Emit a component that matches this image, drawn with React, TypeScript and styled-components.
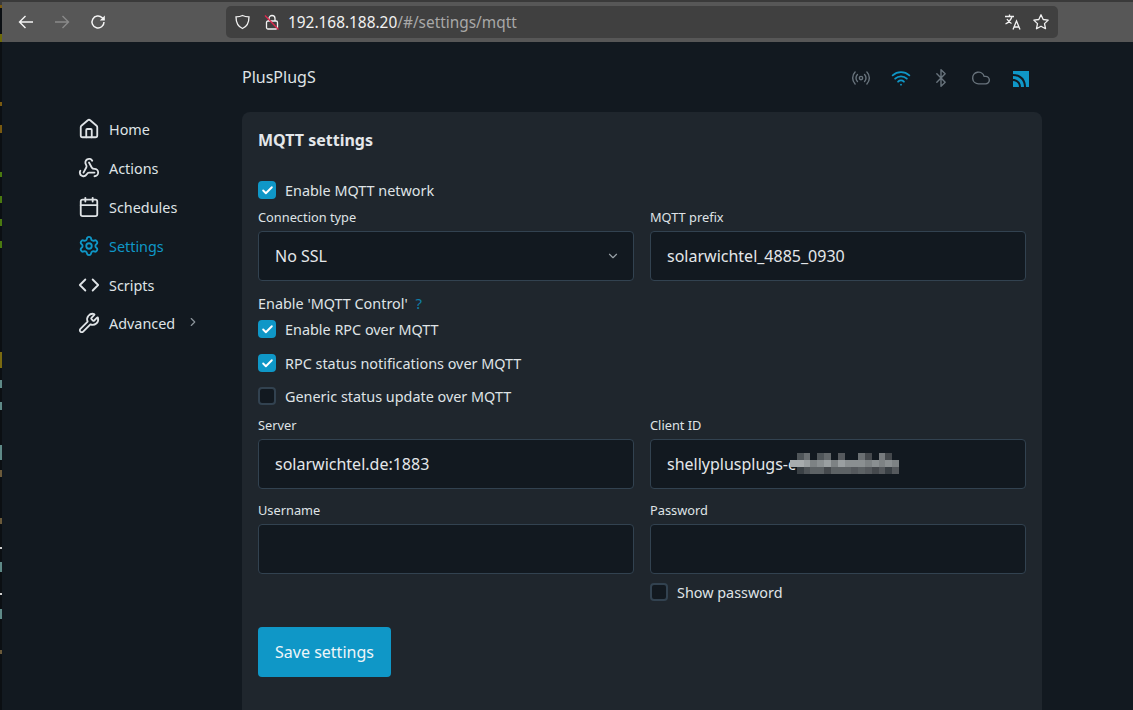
import { Check, ChevronDown, ChevronRight, Bluetooth, Calendar, Cloud, Code, House, Radio, Settings, Webhook, Wifi, Wrench } from "lucide-react";
import styled, { createGlobalStyle } from "styled-components";

const GlobalStyle = createGlobalStyle`
    html, body {
        margin: 0;
        padding: 0;
        height: 100%;
        background: #121920;
        font-family: "Noto Sans", sans-serif;
        overflow: hidden;
    }
`;

const navItems = [
    { label: "Home", Icon: House },
    { label: "Actions", Icon: Webhook },
    { label: "Schedules", Icon: Calendar },
    { label: "Settings", Icon: Settings, active: true },
    { label: "Scripts", Icon: Code },
    { label: "Advanced", Icon: Wrench, more: true },
];

// blurred part of the client id, one row per 7px band
const mosaicRows = [
    ["", "#4f5559", "#6a6f72", "", "#4f5559", "#63686b", "", "#55595d", "", "", "#6a6f72", "#45494d", "", "#777b7e", "#44484c", ""],
    ["#a8acae", "#a8acae", "#9a9fa1", "#7d8284", "#8a8f91", "#9a9fa1", "#7d8284", "#9a9fa1", "#8a8f91", "#8a8f91", "#8a8f91", "#7d8284", "#8a8f91", "#7d8284", "#8a8f91", "#7d8284"],
    ["", "#3a4045", "#4f5458", "#5d6265", "#5d6265", "#45494d", "#5d6265", "#5d6265", "#5d6265", "#55595d", "#5d6265", "#55595d", "#45494d", "#55595d", "#3a4045", "#55595d"],
];

function App() {
    return (
        <Window>
            <GlobalStyle />
            <EdgeStrip />
            <Frame>
                <BrowserBar>
                    <BarButton>
                        <svg width="18" height="18" viewBox="0 0 18 18" fill="none" stroke="currentColor" strokeWidth="1.4">
                            <path d="M16 9H3M8.500 3 2.500 9l6 6" />
                        </svg>
                    </BarButton>
                    <BarButton $off>
                        <svg width="18" height="18" viewBox="0 0 18 18" fill="none" stroke="currentColor" strokeWidth="1.4">
                            <path d="M2 9h13M9.500 3l6 6-6 6" />
                        </svg>
                    </BarButton>
                    <BarButton>
                        <svg width="18" height="18" viewBox="0 0 18 18" fill="none" stroke="currentColor" strokeWidth="1.5">
                            <path d="M15 9a6 6 0 1 1-1.800-4.300L15 6.500" />
                            <path d="M15.800 2.500v5h-5" fill="currentColor" stroke="none" />
                        </svg>
                    </BarButton>
                    <UrlBox>
                        <UrlLeft>
                            <svg width="22" height="16" viewBox="0 0 22 16" fill="none" stroke="#f2f2f2" strokeWidth="1.3">
                                <path d="M8.500 1.500c2 1 4.500 1.300 6.500 1.300 0 6-1.500 9.700-6.500 11.700C3.500 12.500 2 8.800 2 2.800c2 0 4.500-.3 6.500-1.300z" />
                            </svg>
                            <svg width="16" height="18" viewBox="0 0 16 18">
                                <path d="M5 8V5.500a3 3 0 0 1 6 0V8" fill="none" stroke="#f2f2f2" strokeWidth="1.3" />
                                <rect x="2.500" y="8" width="11" height="8" rx="1.500" fill="none" stroke="#f2f2f2" strokeWidth="1.300" />
                                <path d="M1 2.500 14.500 16.500" stroke="#e0294f" strokeWidth="1.400" />
                            </svg>
                            <UrlText>
                                192.168.188.20<UrlPath>/#/settings/mqtt</UrlPath>
                            </UrlText>
                        </UrlLeft>
                        <UrlRight>
                            <svg width="18" height="18" viewBox="0 0 18 18" fill="none" stroke="#f2f2f2" strokeWidth="1.300">
                                <path d="M1 3.500h9M5.500 1.500v2M8 3.500C7 7 4.500 9.500 1.500 11M3 6c1 2 2.700 3.500 4.500 4.500" />
                                <path d="M9 16.500 12.500 8l3.500 8.500M10.200 14h4.600" />
                            </svg>
                            <svg width="18" height="18" viewBox="0 0 18 18" fill="none" stroke="#f2f2f2" strokeWidth="1.300">
                                <path d="M9 1.800l2.200 4.700 5 .6-3.700 3.500 1 5.100L9 13.200l-4.500 2.500 1-5.100L1.800 7.100l5-.6z" strokeLinejoin="round" />
                            </svg>
                        </UrlRight>
                    </UrlBox>
                </BrowserBar>
                <Page>
                    <Sidebar>
                        {navItems.map(({ label, Icon, active, more }) => (
                            <NavItem key={label} $active={active}>
                                <Icon size={22} strokeWidth={2} />
                                <span>{label}</span>
                                {more && <NavChevron><ChevronRight size={14} /></NavChevron>}
                            </NavItem>
                        ))}
                    </Sidebar>
                    <Content>
                        <Header>
                            <DeviceName>PlusPlugS</DeviceName>
                            <StatusIcons>
                                <StatusIcon><Radio size={20} strokeWidth={1.700} /></StatusIcon>
                                <StatusIcon $on><Wifi size={20} strokeWidth={2.200} /></StatusIcon>
                                <StatusIcon><Bluetooth size={20} strokeWidth={1.700} /></StatusIcon>
                                <StatusIcon><Cloud size={20} strokeWidth={1.700} /></StatusIcon>
                                <StatusIcon $on>
                                    <svg width="20" height="20" viewBox="0 -1 20 20" fill="#0f97c7">
                                        <path d="M2 2h16v16h-3C15 9.800 9.800 5 2 5zM2 7c6.500 0 11 4.500 11 11h-3c0-4.600-3.500-8-8-8zM2 12c3.500 0 6 2.500 6 6H2z" />
                                    </svg>
                                </StatusIcon>
                            </StatusIcons>
                        </Header>
                        <Card>
                            <Title>MQTT settings</Title>
                            <CheckRow $mt={29}>
                                <CheckBox $checked><Check size={13} strokeWidth={3.500} /></CheckBox>
                                Enable MQTT network
                            </CheckRow>
                            <FieldGrid $mt={9}>
                                <Field>
                                    <FieldLabel>Connection type</FieldLabel>
                                    <InputBox>
                                        No SSL
                                        <SelectArrow><ChevronDown size={14} /></SelectArrow>
                                    </InputBox>
                                </Field>
                                <Field>
                                    <FieldLabel>MQTT prefix</FieldLabel>
                                    <InputBox>solarwichtel_4885_0930</InputBox>
                                </Field>
                            </FieldGrid>
                            <GroupLabel>
                                Enable 'MQTT Control' <Help>?</Help>
                            </GroupLabel>
                            <CheckRow $mt={7}>
                                <CheckBox $checked><Check size={13} strokeWidth={3.500} /></CheckBox>
                                Enable RPC over MQTT
                            </CheckRow>
                            <CheckRow $mt={16}>
                                <CheckBox $checked><Check size={13} strokeWidth={3.500} /></CheckBox>
                                RPC status notifications over MQTT
                            </CheckRow>
                            <CheckRow $mt={15}>
                                <CheckBox />
                                Generic status update over MQTT
                            </CheckRow>
                            <FieldGrid $mt={11}>
                                <Field>
                                    <FieldLabel>Server</FieldLabel>
                                    <InputBox>solarwichtel.de:1883</InputBox>
                                </Field>
                                <Field>
                                    <FieldLabel>Client ID</FieldLabel>
                                    <InputBox>
                                        shellyplusplugs-c
                                        <Mosaic width="109" height="21" viewBox="0 0 16 3" preserveAspectRatio="none" shapeRendering="crispEdges">
                                            {mosaicRows.map((row, y) =>
                                                row.map((fill, x) => fill && <rect key={`${x}-${y}`} x={x} y={y} width="1" height="1" fill={fill} />)
                                            )}
                                        </Mosaic>
                                    </InputBox>
                                </Field>
                            </FieldGrid>
                            <FieldGrid $mt={12}>
                                <Field>
                                    <FieldLabel>Username</FieldLabel>
                                    <InputBox />
                                </Field>
                                <Field>
                                    <FieldLabel>Password</FieldLabel>
                                    <InputBox />
                                    <CheckRow $mt={9}>
                                        <CheckBox />
                                        Show password
                                    </CheckRow>
                                </Field>
                            </FieldGrid>
                            <SaveButton>Save settings</SaveButton>
                        </Card>
                    </Content>
                </Page>
            </Frame>
        </Window>
    );
}

const Window = styled.div`
    display: flex;
    width: 1133px;
    height: 710px;
    overflow: hidden;
    background: #121920;
`;

const EdgeStrip = styled.div`
    flex: none;
    width: 2px;
    background: linear-gradient(
        to bottom,
        #3a3a3a 0 5px,
        #7a5a10 5px 8px,
        #0b0f13 8px 34px,
        #6e6a08 34px 42px,
        #0b0f13 42px 102px,
        #7a5a10 102px 106px,
        #0b0f13 106px 125px,
        #7a5a10 125px 133px,
        #0b0f13 133px 172px,
        #4a7a10 172px 177px,
        #0b0f13 177px 196px,
        #4a7a10 196px 203px,
        #0b0f13 203px 219px,
        #4a7a10 219px 226px,
        #0b0f13 226px 241px,
        #4a7a10 241px 248px,
        #0b0f13 248px 352px,
        #7a6a10 352px 368px,
        #0b0f13 368px 380px,
        #5f8a88 380px 388px,
        #0b0f13 388px 402px,
        #5f8a88 402px 410px,
        #0b0f13 410px 445px,
        #5f8a88 445px 460px,
        #0b0f13 460px 470px,
        #6b5a3a 470px 477px,
        #0b0f13 477px 518px,
        #6b5a3a 518px 524px,
        #0b0f13 524px 547px,
        #cfcfcf 547px 549px,
        #0b0f13 549px 562px,
        #5f8a88 562px 572px,
        #0b0f13 572px 593px,
        #cfcfcf 593px 595px,
        #0b0f13 595px 609px,
        #5f8a88 609px 619px,
        #0b0f13 619px 650px,
        #6b5a3a 650px 654px,
        #0b0f13 654px
    );
`;

const Frame = styled.div`
    flex: 1;
    display: flex;
    flex-direction: column;
    min-width: 0;
`;

const BrowserBar = styled.div`
    flex: none;
    height: 42px;
    box-sizing: border-box;
    display: flex;
    align-items: center;
    padding: 0 75px 0 15px;
    gap: 18px;
    background: #575757;
    border-top: 2px solid #3a3a3a;
`;

const BarButton = styled.div<{ $off?: boolean }>`
    display: flex;
    color: ${(p) => (p.$off ? "#8a8a8a" : "#f5f5f5")};
`;

const UrlBox = styled.div`
    flex: 1;
    height: 32px;
    margin-left: 101px;
    display: flex;
    align-items: center;
    justify-content: space-between;
    padding: 0 8px;
    background: #404040;
    border-radius: 5px;
`;

const UrlLeft = styled.div`
    display: flex;
    align-items: center;
    gap: 8px;
`;

const UrlRight = styled.div`
    display: flex;
    align-items: center;
    gap: 10px;
`;

const UrlText = styled.span`
    padding-top: 1px;
    font-size: 15.4px;
    color: #f2f2f2;
`;

const UrlPath = styled.span`
    color: #a8a8a8;
`;

const Page = styled.div`
    flex: 1;
    display: flex;
    min-height: 0;
    padding-left: 76px;
`;

const Sidebar = styled.nav`
    flex: none;
    width: 164px;
    padding-top: 74px;
    display: flex;
    flex-direction: column;
    gap: 13px;
`;

const NavItem = styled.div<{ $active?: boolean }>`
    display: flex;
    align-items: center;
    gap: 9px;
    height: 26px;
    font-size: 14.4px;
    color: ${(p) => (p.$active ? "#0f97c7" : "#dfe3e6")};

    &:last-child {
        margin-top: -1px;
    }
`;

const NavChevron = styled.span`
    display: flex;
    margin-left: 2px;
    margin-top: -3px;
    color: #8b939a;
`;

const Content = styled.main`
    flex: none;
    width: 800px;
    display: flex;
    flex-direction: column;
`;

const Header = styled.header`
    flex: none;
    height: 70px;
    display: flex;
    align-items: center;
    justify-content: space-between;
    padding-right: 11px;
`;

const DeviceName = styled.div`
    font-size: 16px;
    color: #dfe3e6;
`;

const StatusIcons = styled.div`
    display: flex;
    align-items: center;
    gap: 20px;
    padding-top: 2px;
`;

const StatusIcon = styled.span<{ $on?: boolean }>`
    display: flex;
    color: ${(p) => (p.$on ? "#0f97c7" : "#68737c")};
`;

const Card = styled.section`
    flex: 1;
    padding: 16px;
    background: #1f262d;
    border-radius: 8px 8px 0 0;
`;

const Title = styled.h2`
    margin: 0;
    font-size: 16px;
    line-height: 24px;
    font-weight: 700;
    color: #e4e7ea;
`;

const CheckRow = styled.label<{ $mt: number }>`
    display: flex;
    align-items: center;
    gap: 9px;
    height: 18px;
    margin-top: ${(p) => p.$mt}px;
    font-size: 14.4px;
    color: #dfe3e6;
`;

const CheckBox = styled.span<{ $checked?: boolean }>`
    flex: none;
    box-sizing: border-box;
    width: 18px;
    height: 18px;
    display: flex;
    align-items: center;
    justify-content: center;
    border-radius: 4px;
    color: #fff;
    background: ${(p) => (p.$checked ? "#0f97c7" : "#121920")};
    border: 2px solid ${(p) => (p.$checked ? "#0f97c7" : "#324250")};
`;

const FieldGrid = styled.div<{ $mt: number }>`
    display: grid;
    grid-template-columns: 376px 376px;
    gap: 16px;
    margin-top: ${(p) => p.$mt}px;
`;

const Field = styled.div`
    display: flex;
    flex-direction: column;
    min-width: 0;
`;

const FieldLabel = styled.div`
    font-size: 12.8px;
    line-height: 18px;
    margin-bottom: 5px;
    color: #dfe3e6;
`;

const InputBox = styled.div`
    position: relative;
    box-sizing: border-box;
    height: 50px;
    display: flex;
    align-items: center;
    padding: 0 16px;
    overflow: hidden;
    font-size: 16px;
    color: #e4e7ea;
    background: #121920;
    border: 1px solid #324250;
    border-radius: 4px;
`;

const SelectArrow = styled.span`
    position: absolute;
    right: 13px;
    top: 17px;
    display: flex;
    color: #9aa2a8;
`;

const Mosaic = styled.svg`
    position: absolute;
    left: 139px;
    top: 13px;
`;

const GroupLabel = styled.div`
    margin-top: 13px;
    font-size: 14.4px;
    line-height: 19px;
    color: #dfe3e6;
`;

const Help = styled.span`
    margin-left: 4px;
    font-size: 15px;
    color: #0f7fa8;
`;

const SaveButton = styled.button`
    display: block;
    width: 133px;
    height: 50px;
    margin-top: 26px;
    padding: 0;
    font-family: inherit;
    font-size: 16px;
    color: #eef5f8;
    background: #0f97c7;
    border: none;
    border-radius: 4px;
`;

export default App;
